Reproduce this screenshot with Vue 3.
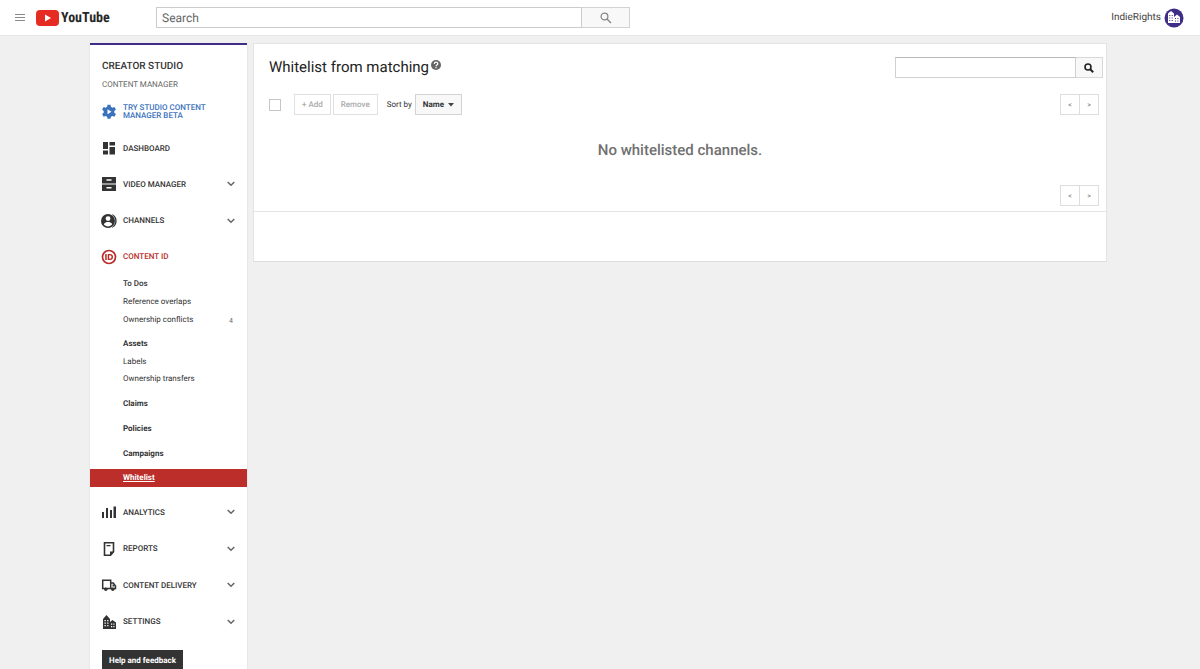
<script setup>
const topItems = [
  { label: 'DASHBOARD', icon: 'dashboard', arrow: false },
  { label: 'VIDEO MANAGER', icon: 'video', arrow: true },
  { label: 'CHANNELS', icon: 'channels', arrow: true },
  { label: 'CONTENT ID', icon: 'id', arrow: false, current: true },
]
const bottomItems = [
  { label: 'ANALYTICS', icon: 'analytics', arrow: true },
  { label: 'REPORTS', icon: 'reports', arrow: true },
  { label: 'CONTENT DELIVERY', icon: 'delivery', arrow: true },
  { label: 'SETTINGS', icon: 'settings', arrow: true },
]
const groups = [
  [{ label: 'To Dos', semi: true }, { label: 'Reference overlaps' }, { label: 'Ownership conflicts', count: 4 }],
  [{ label: 'Assets', bold: true }, { label: 'Labels' }, { label: 'Ownership transfers' }],
  [{ label: 'Claims', bold: true }],
  [{ label: 'Policies', bold: true }],
  [{ label: 'Campaigns', bold: true }],
  [{ label: 'Whitelist', bold: true, active: true }],
]
const icons = {
  dashboard: '<path d="M2 2h5v7H2zM8.500 2h5.500v3.500H8.500zM8.500 7h5.500v7.500H8.500zM2 10.500h5v4H2z"/>',
  video: '<path fill-rule="evenodd" d="M1 1h14v6.500H1zM5.500 3.300v1.500h5V3.300zM1 8.500h14V15H1zM5.500 11v1.500h5V11z"/>',
  channels: '<path fill-rule="evenodd" d="M7 1a7 7 0 1 0 0 14A7 7 0 0 0 7 1zm0 2.200a2.400 2.400 0 1 1 0 4.800 2.400 2.400 0 0 1 0-4.800zM2.800 11.300C3.500 9.600 5.600 9 7 9s3.500.6 4.200 2.300C10.200 12.700 8.700 13.400 7 13.400s-3.200-.7-4.200-2.100z"/><path d="M11.500 1.300a7.500 7.500 0 0 1 0 13.400l-.5-.5a7.500 7.500 0 0 0 0-12.400z"/>',
  id: '<circle cx="8" cy="8" r="6.500" fill="none" stroke="currentColor" stroke-width="1.700"/><path fill-rule="evenodd" d="M4.200 5h1.500v6H4.200zM6.700 5H9a3 3 0 0 1 0 6H6.700zM8.200 6.300v3.400h.7a1.700 1.700 0 0 0 0-3.400z"/>',
  analytics: '<path d="M1 8h2v6H1zM5 4h2v10H5zM9 6h2v8H9zM12.500 2.500H15V14h-2.500z"/>',
  reports: '<path d="M3.500 1.800h9v9L9.500 14.200h-6z" fill="none" stroke="currentColor" stroke-width="1.600"/><path d="M5.500 4h4v1.300h-4zM9 15v-4.500h4.300z"/>',
  delivery: '<path d="M1.700 3.200h8v8.300h-8zM9.700 6h2.600l2.200 3v2.500H9.700z" fill="none" stroke="currentColor" stroke-width="1.500"/><circle cx="4.800" cy="12.200" r="1.700"/><circle cx="11.800" cy="12.200" r="1.700"/><path d="M11.500 7.500h1l1.200 2h-2.200z"/>',
  settings: '<path fill-rule="evenodd" d="M2 15V5l3.500-4L9 5v3l2.500-2L15 8.500V15zM3.500 6v1.200h1.300V6zm2.700 0v1.200h1.300V6zM3.500 8.500v1.200h1.300V8.500zm2.700 0v1.200h1.300V8.500zM3.500 11v1.200h1.300V11zm2.700 0v1.200h1.300V11zm3.800-1.500v1.200h1.200V9.500zm2.300 0v1.200h1.200V9.500zM10 12v1.200h1.200V12zm2.300 0v1.200h1.200V12z"/>',
}
</script>

<template>
  <div class="page">
    <header class="topbar">
      <button class="plain menu" aria-label="Menu">
        <svg width="10" height="8" viewBox="0 0 10 8"><path d="M0 .5h10M0 3.500h10M0 6.500h10" stroke="#8a8a8a" /></svg>
      </button>
      <a class="logo" href="#">
        <svg width="23" height="16" viewBox="0 0 23 16"><rect width="23" height="16" rx="4" fill="#e62b22" /><path d="M9 4.600v6.800L15 8z" fill="#fff" /></svg>
        <span>YouTube</span>
      </a>
      <form class="search" @submit.prevent>
        <input type="text" placeholder="Search" aria-label="Search" />
        <button aria-label="Search YouTube">
          <svg width="12" height="12" viewBox="0 0 12 12" fill="none" stroke="#888"><circle cx="4.500" cy="4.500" r="3.400" stroke-width="1.300" /><path d="M7 7l4 4" stroke-width="1.500" /></svg>
        </button>
      </form>
      <a class="account" href="#">
        <span>IndieRights</span>
        <svg width="20" height="20" viewBox="0 0 20 20"><circle cx="10" cy="10" r="9.500" fill="#3f2d87" /><path fill="#fff" fill-rule="evenodd" d="M4 15V5.500L7 3l3 2.500V9l3-2.500L16 9v6zM5.300 7v1h1V7zm2.400 0v1h1V7zM5.300 9.500v1h1v-1zm2.400 0v1h1v-1zM5.300 12v1h1v-1zm2.400 0v1h1v-1zm3.300-2v1h1v-1zm2.400 0v1h1v-1zM11 12.500v1h1v-1zm2.400 0v1h1v-1z" /></svg>
      </a>
    </header>

    <div class="body">
      <nav class="sidebar">
        <h2>CREATOR STUDIO</h2>
        <p class="sub">CONTENT MANAGER</p>
        <a class="beta" href="#">
          <svg width="16" height="16" viewBox="0 0 16 16"><path fill="#3a72bd" fill-rule="evenodd" d="M6.500.8h3l.4 2 1.500.9 2-.8 1.500 2.600-1.600 1.400v1.800l1.600 1.400-1.500 2.600-2-.8-1.500.9-.4 2h-3l-.4-2-1.500-.9-2 .8-1.500-2.600 1.600-1.400V6.900L1.100 5.500l1.500-2.600 2 .8 1.500-.9zM6.500 5.300v5l4-2.500z" /></svg>
          <span>TRY STUDIO CONTENT MANAGER BETA</span>
        </a>

        <div class="items">
          <a v-for="item in topItems" :key="item.label" href="#" class="item" :class="{ current: item.current }">
            <svg width="16" height="16" viewBox="0 0 16 16" fill="currentColor" v-html="icons[item.icon]"></svg>
            <span>{{ item.label }}</span>
            <svg v-if="item.arrow" class="arrow" width="8" height="6" viewBox="0 0 8 6"><path d="M.7 1L4 4.300 7.300 1" /></svg>
          </a>
        </div>

        <div class="submenu">
          <ul v-for="(group, g) in groups" :key="g" :class="{ triple: group.length === 3 }">
            <li v-for="link in group" :key="link.label" :class="{ bold: link.bold, semi: link.semi, active: link.active }">
              <a href="#">{{ link.label }}</a>
              <span v-if="link.count" class="count">{{ link.count }}</span>
            </li>
          </ul>
        </div>

        <div class="items lower">
          <a v-for="item in bottomItems" :key="item.label" href="#" class="item">
            <svg width="16" height="16" viewBox="0 0 16 16" fill="currentColor" v-html="icons[item.icon]"></svg>
            <span>{{ item.label }}</span>
            <svg class="arrow" width="8" height="6" viewBox="0 0 8 6"><path d="M.7 1L4 4.300 7.300 1" /></svg>
          </a>
        </div>

        <button class="help">Help and feedback</button>
      </nav>

      <main class="main">
        <section class="card">
          <div class="title-row">
            <h1>Whitelist from matching</h1>
            <svg class="info" width="10" height="10" viewBox="0 0 10 10"><circle cx="5" cy="5" r="5" fill="#666" /><path d="M3.300 3.900c0-2.300 3.500-2.200 3.500-.2C6.800 5 5 4.900 5 6.300" fill="none" stroke="#fff" stroke-width="1.200" /><path d="M4.400 7h1.200v1.200H4.400z" fill="#fff" /></svg>
            <form class="find" @submit.prevent>
              <input type="text" aria-label="Find channels" />
              <button aria-label="Find">
                <svg width="10" height="10" viewBox="0 0 10 10" fill="none" stroke="#222"><circle cx="4" cy="4" r="3" stroke-width="1.600" /><path d="M6.200 6.200l3 3" stroke-width="2" /></svg>
              </button>
            </form>
          </div>

          <div class="toolbar">
            <input type="checkbox" aria-label="Select all" />
            <button class="btn off add">+ Add</button>
            <button class="btn off">Remove</button>
            <span id="sort-label" class="sort">Sort by</span>
            <button id="sort-value" class="btn name" aria-labelledby="sort-label sort-value">Name<svg width="6" height="4" viewBox="0 0 6 4"><path d="M0 0h6L3 3.500z" fill="#444" /></svg></button>
            <div class="pager"><button>&lt;</button><button>&gt;</button></div>
          </div>

          <p class="empty">No whitelisted channels.</p>
          <div class="pager"><button>&lt;</button><button>&gt;</button></div>
        </section>
        <div class="footer"></div>
      </main>
    </div>
  </div>
</template>

<style>
body {
  background: #f0f0f0;
}
</style>

<style scoped>
* {
  box-sizing: border-box;
}
.page {
  height: 100vh;
  overflow: hidden;
  font-family: Roboto, "Liberation Sans", sans-serif;
  font-size: 8px;
  text-rendering: geometricPrecision;
  color: #333;
  background: #f0f0f0;
}
h1, h2, p, ul {
  margin: 0;
  padding: 0;
  list-style: none;
}
a {
  color: inherit;
  text-decoration: none;
}
button, input {
  font: inherit;
  text-rendering: inherit;
  color: inherit;
  padding: 0;
  margin: 0;
  border-radius: 0;
  outline: none;
}
svg {
  display: block;
  flex: none;
}
.topbar {
  display: flex;
  align-items: center;
  height: 36px;
  padding: 0 16px 0 14px;
  background: #fff;
  border-bottom: 1px solid #e8e8e8;
}
.plain {
  border: 0;
  background: none;
}
.menu {
  width: 22px;
  padding-left: 1px;
}
.logo {
  display: flex;
  align-items: center;
  gap: 2px;
  width: 120px;
  font-family: "Roboto Condensed", "Liberation Sans Narrow", Roboto, sans-serif;
  font-size: 14px;
  font-weight: 700;
  color: #282828;
}
.search {
  display: flex;
  width: 474px;
  height: 21px;
}
.search input {
  flex: 1;
  min-width: 0;
  padding-left: 5px;
  font-size: 12px;
  border: 1px solid #ccc;
  background: #fff;
}
.search input::placeholder {
  color: #666;
  opacity: 1;
}
.search button {
  display: grid;
  place-items: center;
  width: 48px;
  border: 1px solid #d3d3d3;
  border-left: 0;
  background: #f8f8f8;
}
.account {
  display: flex;
  align-items: center;
  gap: 3px;
  margin-left: auto;
  font-size: 10px;
  line-height: 14px;
  color: #444;
}
.body {
  display: flex;
  align-items: flex-start;
  gap: 6px;
  padding: 7px 93px 0 90px;
}
.sidebar {
  flex: none;
  width: 157px;
  min-height: calc(100vh - 43px);
  border-top: 2px solid #3f2d87;
  background: #fff;
  box-shadow: 0 1px 2px rgba(0, 0, 0, 0.1);
}
.sidebar h2 {
  padding: 16px 12px 0;
  font-size: 10px;
  line-height: 12px;
  font-weight: 500;
}
.sub {
  padding: 7px 12px 0;
  line-height: 10px;
  color: #666;
}
.beta {
  display: flex;
  align-items: center;
  gap: 6px;
  padding: 14px 30px 0 11px;
  line-height: 8px;
  font-weight: 500;
  color: #3a72bd;
}
.items {
  display: grid;
  grid-auto-rows: 1fr;
  height: 145px;
  margin-top: 10px;
}
.item {
  display: flex;
  align-items: center;
  gap: 6px;
  padding: 0 12px 0 11px;
  font-weight: 500;
}
.item.current {
  color: #b92b27;
}
.arrow {
  margin-left: auto;
  fill: none;
  stroke: #666;
  stroke-width: 1.5;
}
.submenu {
  display: flex;
  flex-direction: column;
  justify-content: space-between;
  height: 212px;
}
.submenu ul {
  display: grid;
  grid-auto-rows: 1fr;
  height: 18px;
}
.submenu ul.triple {
  height: 53px;
}
.submenu li {
  display: flex;
  align-items: center;
  padding: 0 14px 0 33px;
}
.bold {
  font-weight: 700;
}
.semi {
  font-weight: 500;
}
.submenu .active {
  color: #fff;
  background: #bc2e2a;
}
.active a {
  text-decoration: underline;
}
.count {
  margin-left: auto;
  padding-top: 4px;
  font-size: 7px;
  color: #666;
}
.lower {
  height: 146px;
  margin-top: 7px;
}
.help {
  display: block;
  height: 20px;
  margin: 10px 12px 0;
  padding: 0 7px;
  font-weight: 700;
  color: #fff;
  border: 0;
  background: #333;
}
.main {
  flex: 1;
  min-width: 0;
}
.card, .footer {
  border: 1px solid #e4e4e4;
  background: #fff;
}
.card {
  padding: 13px 7px 5px 15px;
}
.footer {
  height: 50px;
  border-top: 0;
  border-bottom: 1px solid #ddd;
}
.title-row {
  display: flex;
  align-items: flex-start;
}
h1 {
  font-size: 15px;
  line-height: 20px;
  font-weight: 400;
  color: #222;
}
.info {
  margin: 3px 0 0 2px;
}
.find {
  display: flex;
  height: 21px;
  width: 208px;
  margin: 0 -4px 0 auto;
}
.find input {
  flex: 1;
  min-width: 0;
  border: 1px solid #d0d0d0;
  border-top-color: #b8b8b8;
  background: #fff;
}
.find button {
  display: grid;
  place-items: center;
  width: 27px;
  border: 1px solid #d8d8d8;
  border-left: 0;
  background: #f8f8f8;
}
.toolbar {
  display: flex;
  align-items: center;
  margin-top: 16px;
}
.toolbar input {
  appearance: none;
  width: 12px;
  height: 12px;
  margin-right: 13px;
  border: 1px solid #c6c6c6;
  background: #fff;
}
.btn {
  height: 21px;
  padding: 0 7px;
  font-weight: 500;
  border: 1px solid #d3d3d3;
  background: #f8f8f8;
}
.btn.off {
  color: #aaa;
  border-color: #e0e0e0;
  background: #fff;
}
.btn.add {
  margin-right: 2px;
}
.sort {
  margin: 0 3px 0 9px;
}
.name {
  display: flex;
  align-items: center;
  gap: 4px;
  font-weight: 700;
}
.pager {
  display: flex;
  width: 39px;
  margin-left: auto;
}
.pager button {
  flex: 1;
  height: 21px;
  font-size: 7px;
  font-weight: 500;
  color: #888;
  border: 1px solid #ddd;
  background: #fff;
}
.pager button + button {
  border-left: 0;
}
.empty {
  padding: 25px 8px 25px 0;
  font-size: 15px;
  line-height: 20px;
  font-weight: 500;
  text-align: center;
  color: #707070;
}
</style>
